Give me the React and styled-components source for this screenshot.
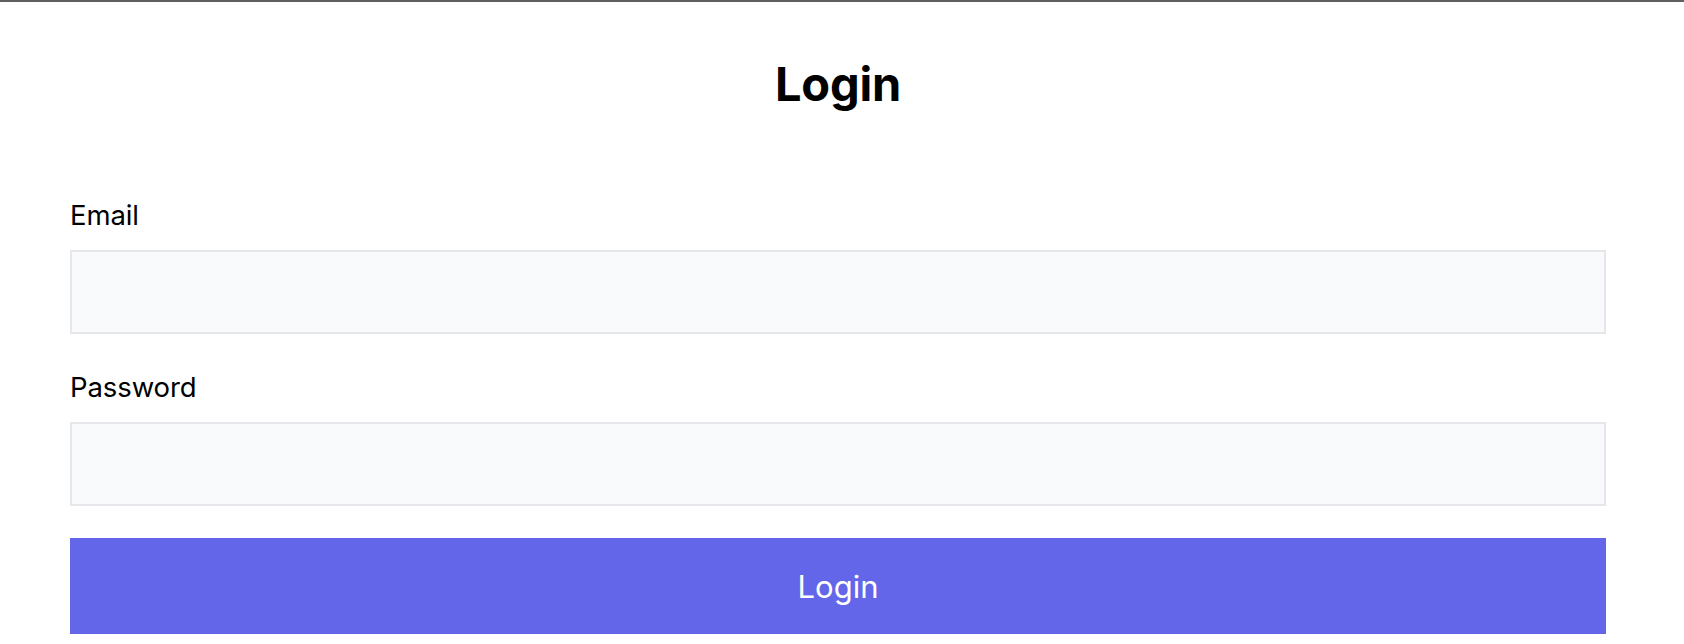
import React from 'react'
import styled, { createGlobalStyle } from 'styled-components'

const GlobalStyle = createGlobalStyle`
  * { box-sizing: border-box; }
  body {
    margin: 0;
    background: #fff;
    font-family: Inter, "Noto Sans", sans-serif;
    color: #000;
  }
`

const Page = styled.div`
  border-top: 2px solid #5f5f5f;
  height: 644px;
  overflow: hidden;
`

const Form = styled.form`
  display: flex;
  flex-direction: column;
  width: 1536px;
  margin-left: 70px;
  padding-top: 53px;
`

const Title = styled.h1`
  margin: 0 0 86px;
  font-size: 47px;
  line-height: 57px;
  font-weight: 700;
  text-align: center;
  letter-spacing: -0.2px;
`

const Label = styled.label`
  font-size: 27.5px;
  line-height: 34px;
  margin-bottom: 18px;
  letter-spacing: -0.1px;
`

const Input = styled.input`
  height: 84px;
  width: 100%;
  background: #f9fafb;
  border: 2px solid #e5e7eb;
  margin-bottom: ${(p) => p.$gap}px;
  font-size: 28px;
  padding: 0 20px;
  outline: none;
`

const Button = styled.button`
  height: 96px;
  width: 100%;
  border: none;
  background: #6366e8;
  color: #fff;
  font-family: Inter, "Noto Sans", sans-serif;
  font-size: 31px;
  cursor: pointer;
`

export default function App() {
  return (
    <Page>
      <GlobalStyle />
      <Form onSubmit={(e) => e.preventDefault()}>
        <Title>Login</Title>
        <Label htmlFor="email">Email</Label>
        <Input id="email" type="email" $gap={36} />
        <Label htmlFor="password">Password</Label>
        <Input id="password" type="password" $gap={32} />
        <Button type="submit">Login</Button>
      </Form>
    </Page>
  )
}
